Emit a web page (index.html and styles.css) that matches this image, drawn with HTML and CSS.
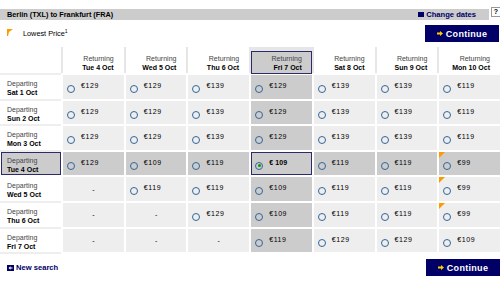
FILE: index.html
```html
<!DOCTYPE html>
<html>
<head>
<meta charset="utf-8">
<title>Berlin (TXL) to Frankfurt (FRA)</title>
<link rel="stylesheet" href="styles.css">
</head>
<body>
<div class="page">
  <div class="topbar">
    <div class="bar">
      <span class="title">Berlin (TXL) to Frankfurt (FRA)</span>
      <a class="change"><span class="sq"></span>Change dates</a>
    </div>
    <span class="help">?</span>
  </div>

  <div class="legend-row">
    <div class="legend">
      <svg class="flag" width="6" height="7" viewBox="0 0 6 7"><polygon points="0,0 6,0 2,3 1,7 0,7" fill="#ff9900"/></svg>
      <span>Lowest Price<sup>1</sup></span>
    </div>
    <button class="continue"><svg class="arr" width="6" height="5" viewBox="0 0 6 5"><polygon points="0,1.5 3,1.5 3,0 6,2.5 3,5 3,3.5 0,3.5" fill="#ffcc00"/></svg>Continue</button>
  </div>

  <div class="head">
    <div class="hcell blank"></div>
    <div class="hcell"><span class="ret">Returning</span><b>Tue 4 Oct</b></div>
    <div class="hcell"><span class="ret">Returning</span><b>Wed 5 Oct</b></div>
    <div class="hcell"><span class="ret">Returning</span><b>Thu 6 Oct</b></div>
    <div class="hcell sel"><span class="ret">Returning</span><b>Fri 7 Oct</b></div>
    <div class="hcell"><span class="ret">Returning</span><b>Sat 8 Oct</b></div>
    <div class="hcell"><span class="ret">Returning</span><b>Sun 9 Oct</b></div>
    <div class="hcell"><span class="ret">Returning</span><b>Mon 10 Oct</b></div>
  </div>

  <div class="table">
    <div class="lbl"><span>Departing</span><b>Sat 1 Oct</b></div>
    <div class="cell"><i class="radio"></i><span class="price">€129</span></div>
    <div class="cell"><i class="radio"></i><span class="price">€129</span></div>
    <div class="cell"><i class="radio"></i><span class="price">€139</span></div>
    <div class="cell dk"><i class="radio"></i><span class="price">€129</span></div>
    <div class="cell"><i class="radio"></i><span class="price">€139</span></div>
    <div class="cell"><i class="radio"></i><span class="price">€139</span></div>
    <div class="cell"><i class="radio"></i><span class="price">€119</span></div>

    <div class="lbl"><span>Departing</span><b>Sun 2 Oct</b></div>
    <div class="cell"><i class="radio"></i><span class="price">€129</span></div>
    <div class="cell"><i class="radio"></i><span class="price">€129</span></div>
    <div class="cell"><i class="radio"></i><span class="price">€139</span></div>
    <div class="cell dk"><i class="radio"></i><span class="price">€129</span></div>
    <div class="cell"><i class="radio"></i><span class="price">€139</span></div>
    <div class="cell"><i class="radio"></i><span class="price">€139</span></div>
    <div class="cell"><i class="radio"></i><span class="price">€119</span></div>

    <div class="lbl"><span>Departing</span><b>Mon 3 Oct</b></div>
    <div class="cell"><i class="radio"></i><span class="price">€129</span></div>
    <div class="cell"><i class="radio"></i><span class="price">€129</span></div>
    <div class="cell"><i class="radio"></i><span class="price">€139</span></div>
    <div class="cell dk"><i class="radio"></i><span class="price">€129</span></div>
    <div class="cell"><i class="radio"></i><span class="price">€139</span></div>
    <div class="cell"><i class="radio"></i><span class="price">€139</span></div>
    <div class="cell"><i class="radio"></i><span class="price">€119</span></div>

    <div class="lbl sel"><span>Departing</span><b>Tue 4 Oct</b></div>
    <div class="cell dk"><i class="radio"></i><span class="price">€129</span></div>
    <div class="cell dk"><i class="radio"></i><span class="price">€109</span></div>
    <div class="cell dk"><i class="radio"></i><span class="price">€119</span></div>
    <div class="cell dk sel"><i class="radio on"></i><span class="price">€ 109</span></div>
    <div class="cell dk"><i class="radio"></i><span class="price">€119</span></div>
    <div class="cell dk"><i class="radio"></i><span class="price">€119</span></div>
    <div class="cell dk low"><i class="radio"></i><span class="price">€99</span></div>

    <div class="lbl"><span>Departing</span><b>Wed 5 Oct</b></div>
    <div class="cell na">-</div>
    <div class="cell"><i class="radio"></i><span class="price">€119</span></div>
    <div class="cell"><i class="radio"></i><span class="price">€119</span></div>
    <div class="cell dk"><i class="radio"></i><span class="price">€109</span></div>
    <div class="cell"><i class="radio"></i><span class="price">€119</span></div>
    <div class="cell"><i class="radio"></i><span class="price">€119</span></div>
    <div class="cell low"><i class="radio"></i><span class="price">€99</span></div>

    <div class="lbl"><span>Departing</span><b>Thu 6 Oct</b></div>
    <div class="cell na">-</div>
    <div class="cell na">-</div>
    <div class="cell"><i class="radio"></i><span class="price">€129</span></div>
    <div class="cell dk"><i class="radio"></i><span class="price">€109</span></div>
    <div class="cell"><i class="radio"></i><span class="price">€119</span></div>
    <div class="cell"><i class="radio"></i><span class="price">€119</span></div>
    <div class="cell low"><i class="radio"></i><span class="price">€99</span></div>

    <div class="lbl"><span>Departing</span><b>Fri 7 Oct</b></div>
    <div class="cell na">-</div>
    <div class="cell na">-</div>
    <div class="cell na">-</div>
    <div class="cell dk"><i class="radio"></i><span class="price">€119</span></div>
    <div class="cell"><i class="radio"></i><span class="price">€129</span></div>
    <div class="cell"><i class="radio"></i><span class="price">€129</span></div>
    <div class="cell"><i class="radio"></i><span class="price">€109</span></div>
  </div>

  <div class="footer">
    <a class="newsearch"><svg class="ns" width="7" height="6" viewBox="0 0 7 6"><rect width="7" height="6" fill="#000066"/><polygon points="1.5,3 3.5,1.2 3.5,2.4 5.5,2.4 5.5,3.6 3.5,3.6 3.5,4.8" fill="#ffffff"/></svg>New search</a>
    <button class="continue"><svg class="arr" width="6" height="5" viewBox="0 0 6 5"><polygon points="0,1.5 3,1.5 3,0 6,2.5 3,5 3,3.5 0,3.5" fill="#ffcc00"/></svg>Continue</button>
  </div>
</div>
</body>
</html>
```

FILE: styles.css
```css
html, body {
  margin: 0;
  padding: 0;
  background: #ffffff;
}

body {
  font-family: "Liberation Sans", Arial, sans-serif;
  font-size: 7px;
  color: #000000;
}

.page {
  width: 500px;
}

/* top bar */
.topbar {
  display: flex;
  align-items: flex-start;
  gap: 2px;
  margin-top: 7px;
}

.bar {
  flex: 1;
  height: 11px;
  margin-top: 2px;
  background: #cccccc;
  display: flex;
  align-items: center;
}

.title {
  flex: 1;
  padding-left: 7px;
  font-weight: bold;
  font-size: 7.3px;
}

.change {
  display: flex;
  align-items: center;
  color: #000066;
  font-weight: bold;
  font-size: 7.6px;
  margin-right: 13px;
}

.sq {
  width: 6px;
  height: 5px;
  background: #000066;
  margin-right: 2px;
}

.help {
  box-sizing: border-box;
  width: 9px;
  height: 10px;
  border: 1px solid #999999;
  border-right: none;
  background: #ffffff;
  font-weight: bold;
  font-size: 7px;
  line-height: 8px;
  text-align: center;
}

/* legend row */
.legend-row {
  display: flex;
  justify-content: space-between;
  align-items: center;
  height: 17px;
  margin-top: 5px;
}

.legend {
  display: flex;
  align-items: center;
  padding-left: 7px;
  font-size: 7.3px;
}

.flag {
  margin-right: 10px;
  margin-top: -2px;
}

.legend sup {
  font-size: 5px;
  vertical-align: 3px;
  line-height: 0;
}

.continue {
  box-sizing: border-box;
  width: 74px;
  height: 17px;
  margin: 0 1px 0 0;
  padding: 0;
  border: none;
  background: #000066;
  color: #ffffff;
  font-family: "Liberation Sans", Arial, sans-serif;
  font-weight: bold;
  font-size: 9px;
  letter-spacing: 0.3px;
  display: flex;
  align-items: center;
  justify-content: center;
}

.arr {
  margin-right: 3px;
}

/* header grid */
.head {
  display: grid;
  grid-template-columns: 61px repeat(7, 1fr);
  column-gap: 2px;
  height: 26px;
  margin-top: 5px;
  background: #e6e6e6;
}

.hcell {
  background: #ffffff;
  display: flex;
  flex-direction: column;
  align-items: flex-end;
  padding: 7px 10px 0 0;
  line-height: 9px;
}

.hcell .ret {
  color: #444444;
}

.hcell.blank {
  box-shadow: 0 2px 0 #eeeeee;
}

.hcell.sel {
  margin-top: 4px;
  margin-bottom: -1px;
  padding-top: 3px;
  background: #cccccc;
  box-shadow: inset 0 0 0 1px #2b2b6b;
}

/* data grid */
.table {
  display: grid;
  grid-template-columns: 61px repeat(7, 1fr);
  grid-template-rows: repeat(7, 23.6px);
  gap: 2px;
  margin-top: 2px;
}

.lbl {
  display: flex;
  flex-direction: column;
  padding: 4px 0 0 7px;
  line-height: 9px;
  box-shadow: 0 2px 0 #eeeeee;
}

.lbl span {
  color: #444444;
}

.lbl.sel {
  background: #cccccc;
  box-shadow: inset 0 0 0 1px #2b2b6b;
  margin-left: 1px;
  padding-left: 6px;
}

.cell {
  position: relative;
  background: #eeeeee;
  display: flex;
  align-items: flex-start;
  padding-left: 4px;
}

.cell.dk {
  background: #cccccc;
}

.cell.sel {
  box-shadow: inset 0 0 0 1px #2b2b6b;
}

.cell.sel .price {
  font-weight: bold;
  letter-spacing: 0.1px;
}

.cell.na {
  justify-content: center;
  align-items: center;
  padding: 0;
}

.cell.low::before {
  content: "";
  position: absolute;
  top: 0;
  left: 0;
  width: 0;
  height: 0;
  border-top: 6px solid #ff9900;
  border-right: 6px solid transparent;
}

.radio {
  box-sizing: border-box;
  flex: none;
  width: 8px;
  height: 8px;
  margin-top: 10px;
  border: 1.3px solid #336699;
  border-radius: 50%;
  display: flex;
  align-items: center;
  justify-content: center;
}

.radio.on::after {
  content: "";
  width: 3px;
  height: 3px;
  border-radius: 50%;
  background: #009900;
}

.price {
  margin: 7px 0 0 6px;
  line-height: 8px;
  letter-spacing: 0.6px;
}

/* footer */
.footer {
  display: flex;
  justify-content: space-between;
  align-items: center;
  height: 17px;
  margin-top: 7px;
}

.newsearch {
  display: flex;
  align-items: center;
  padding-left: 7px;
  color: #000066;
  font-weight: bold;
  font-size: 7.6px;
}

.ns {
  margin-right: 2px;
}

.footer .continue {
  margin-right: 0;
}
```
